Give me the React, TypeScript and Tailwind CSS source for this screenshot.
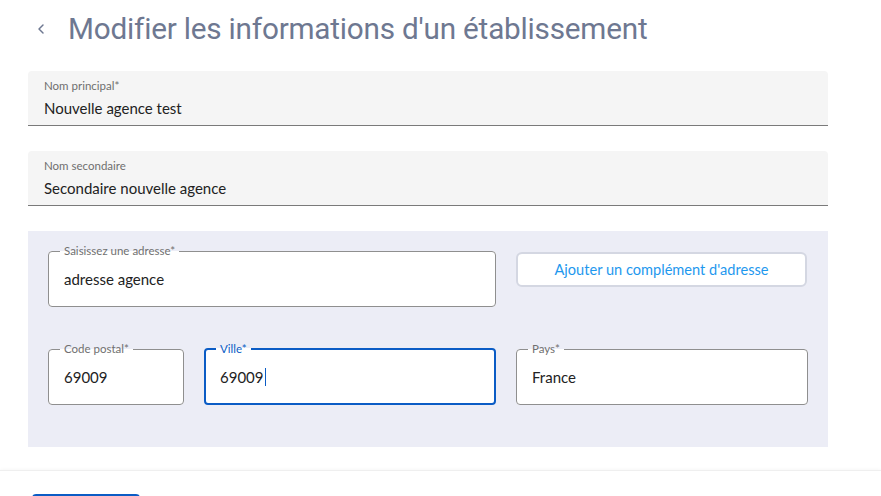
import { ChevronLeft } from 'lucide-react';

const body = { fontFamily: '"Source Sans Pro", Lato, "Liberation Sans", sans-serif' };

export default function App() {
  return (
    <div className="h-[496px] overflow-hidden bg-white" style={body}>
      <div className="w-[800px] ml-[28px]">
        <header className="flex h-[71px] items-center gap-[19px] pl-[5px] pb-[14px]">
          <ChevronLeft className="h-[16px] w-[16px] text-[#6e7891]" strokeWidth={2.2} />
          <h1
            className="text-[29.7px] leading-none text-[#6e7891] tracking-[-0.2px]"
            style={{ fontFamily: 'Roboto, "Liberation Sans", sans-serif' }}
          >
            Modifier les informations d'un établissement
          </h1>
        </header>

        <div className="flex flex-col gap-[25px]">
          <FilledField label="Nom principal*" value="Nouvelle agence test" />
          <FilledField label="Nom secondaire" value="Secondaire nouvelle agence" />

          <section className="grid grid-cols-[136px_292px_292px] gap-x-[20px] gap-y-[36px] bg-[#ecedf6] px-[20px] pt-[14px] pb-[42px]">
            <div className="col-span-2">
              <OutlinedField label="Saisissez une adresse*" value="adresse agence" />
            </div>
            <div className="pt-[7px]">
              <button className="h-[35px] w-[291px] rounded-[6px] border-2 border-[#d4d7e2] bg-white text-[14.6px] text-[#1e98ee]">
                Ajouter un complément d'adresse
              </button>
            </div>
            <OutlinedField label="Code postal*" value="69009" />
            <OutlinedField label="Ville*" value="69009" focused />
            <OutlinedField label="Pays*" value="France" />
          </section>
        </div>
      </div>

      <div className="mt-[23px] border-t border-[#efefef] shadow-[0_-1px_3px_rgba(0,0,0,0.03)] pt-[23px] pl-[32px]">
        <div className="h-[36px] w-[108px] rounded-[4px] border-2 border-[#0b5cc5] bg-white" />
      </div>
    </div>
  );
}

function FilledField({ label, value }: { label: string; value: string }) {
  return (
    <div className="h-[55px] rounded-t-[4px] border-b border-[#7a7a7a] bg-[#f5f5f5] px-[16px] pt-[8px]">
      <p className="text-[11.5px] leading-[14px] text-[#6f6f6f]">{label}</p>
      <p className="mt-[6px] text-[15px] leading-[19px] text-[#222]">{value}</p>
    </div>
  );
}

function OutlinedField({
  label,
  value,
  focused,
}: {
  label: string;
  value: string;
  focused?: boolean;
}) {
  return (
    <fieldset
      className={
        focused
          ? 'h-[62px] rounded-[4px] border-2 border-[#0b5cc5] bg-white px-[14px]'
          : 'h-[62px] rounded-[4px] border border-[#8f8f8f] bg-white px-[15px]'
      }
    >
      <legend
        className={
          focused
            ? 'ml-[-4px] px-[4px] text-[11.5px] leading-[12px] text-[#0b5cc5]'
            : 'ml-[-4px] px-[4px] text-[11.5px] leading-[12px] text-[#707070]'
        }
      >
        {label}
      </legend>
      <div className="mt-[12px] flex items-center text-[15px] leading-[20px] text-[#222]">
        {value}
        {focused && <span className="ml-[1px] h-[18px] w-[1px] bg-[#0b5cc5]" />}
      </div>
    </fieldset>
  );
}
